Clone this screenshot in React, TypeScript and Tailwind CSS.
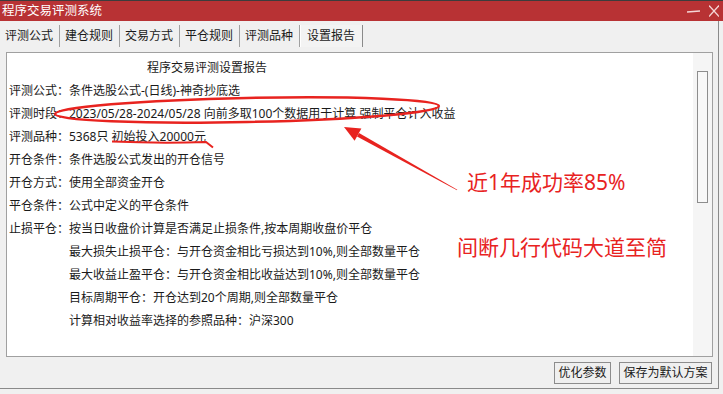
import React from 'react';

const tabs = ['评测公式', '建仓规则', '交易方式', '平仓规则', '评测品种', '设置报告'];

const lines: { label?: string; text: string; indent?: boolean }[] = [
  { label: '评测公式：', text: '条件选股公式-(日线)-神奇抄底选' },
  { label: '评测时段：', text: '2023/05/28-2024/05/28 向前多取100个数据用于计算 强制平仓计入收益' },
  { label: '评测品种：', text: '5368只 初始投入20000元' },
  { label: '开仓条件：', text: '条件选股公式发出的开仓信号' },
  { label: '开仓方式：', text: '使用全部资金开仓' },
  { label: '平仓条件：', text: '公式中定义的平仓条件' },
  { label: '止损平仓：', text: '按当日收盘价计算是否满足止损条件,按本周期收盘价平仓' },
  { indent: true, text: '最大损失止损平仓：与开仓资金相比亏损达到10%,则全部数量平仓' },
  { indent: true, text: '最大收益止盈平仓：与开仓资金相比收益达到10%,则全部数量平仓' },
  { indent: true, text: '目标周期平仓：开仓达到20个周期,则全部数量平仓' },
  { indent: true, text: '计算相对收益率选择的参照品种：沪深300' },
];

const Annotations = () => (
  <svg className="absolute inset-0 pointer-events-none" width="723" height="394" viewBox="0 0 723 394">
    <ellipse cx="247" cy="110" rx="192" ry="12" transform="rotate(-1.2 247 110)" fill="none" stroke="#e8231f" strokeWidth="2.5" />
    <polygon points="344,127 361.4,128.6 354.6,140.8" fill="#e8231f" />
    <polygon points="359,133 357,136.5 457,190.3 457.3,189.7" fill="#e8231f" />
    <path d="M112 141.5 Q160 143.5 206 142 L213 147.5" fill="none" stroke="#e8231f" strokeWidth="2" />
  </svg>
);

export default function App() {
  return (
    <div className="relative w-[723px] h-[394px] overflow-hidden bg-[#f0f0f0] text-[12px] text-[#1a1a1a] font-['Noto_Sans','Noto_Sans_CJK_SC',sans-serif]">
      {/* Title bar */}
      <div className="h-[21px] bg-[#b83234] border-t border-[#3c3c3c] flex items-center justify-between pl-[2px] pr-[4px]">
        <span className="text-white leading-none text-[12.5px]">程序交易评测系统</span>
        <div className="flex items-center gap-[9px]">
          <svg width="13" height="10" viewBox="0 0 13 10">
            <line x1="0" y1="6" x2="13" y2="5" stroke="#f4d6d6" strokeWidth="1.3" />
          </svg>
          <svg width="10" height="12" viewBox="0 0 10 12">
            <line x1="0" y1="0.5" x2="10" y2="11.5" stroke="#f4d6d6" strokeWidth="1.2" />
            <line x1="10" y1="0.5" x2="0" y2="11.5" stroke="#f4d6d6" strokeWidth="1.2" />
          </svg>
        </div>
      </div>

      {/* Body */}
      <div className="w-[719px] h-[368px] border-r border-b border-[#8a8a8a] flex flex-col">
        {/* Tabs */}
        <div className="h-[31px] flex items-start pt-[4px]">
          {tabs.map((t, i) => (
            <div
              key={t}
              className={
                i === tabs.length - 1
                  ? 'w-[63px] h-[22px] pl-[6px] flex items-center border-l border-white border-r border-r-[#8a8a8a] bg-[#f3f3f3]'
                  : 'w-[60px] h-[22px] pl-[5px] flex items-center border-r border-[#a0a0a0]'
              }
            >
              <span className="leading-none">{t}</span>
            </div>
          ))}
        </div>

        {/* Report panel */}
        <div className="ml-[6px] w-[707px] h-[305px] border border-[#a0a0a0] bg-white flex">
          <div className="flex-1 pt-[3px] pl-[2px]">
            <div className="leading-[23px] pl-[138px]">程序交易评测设置报告</div>
            {lines.map((l, i) => (
              <div key={i} className="leading-[23px] flex">
                {l.indent ? <span className="w-[60px]" /> : <span className="w-[60px]">{l.label}</span>}
                <span>{l.text}</span>
              </div>
            ))}
          </div>
          <div className="w-[19px] bg-[#f5f5f5] pt-[18px] pl-[4px]">
            <div className="w-[11px] h-[132px] border border-[#8d8d8d] bg-[#f8f8f8]" />
          </div>
        </div>

        {/* Buttons */}
        <div className="flex justify-end gap-[8px] pr-[6px] pt-[5px]">
          <button className="w-[57px] h-[22px] border border-[#8c8c8c] bg-[#efefef] leading-none">优化参数</button>
          <button className="w-[93px] h-[22px] border border-[#8c8c8c] bg-[#efefef] leading-none">保存为默认方案</button>
        </div>
      </div>

      {/* Red notes */}
      <div className="absolute left-[467px] top-[172px] text-[21px] leading-none text-[#e8231f]">近1年成功率85%</div>
      <div className="absolute left-[457px] top-[237px] text-[21px] leading-none text-[#e8231f]">间断几行代码大道至简</div>
      <Annotations />
    </div>
  );
}
